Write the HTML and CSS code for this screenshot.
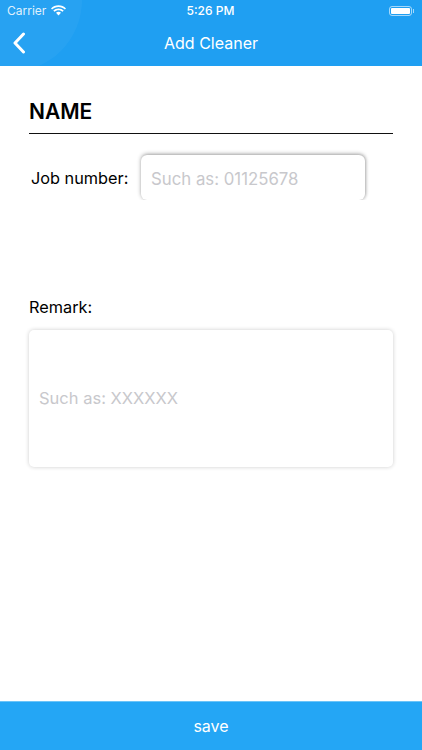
FILE: index.html
```html
<!doctype html>
<html lang="en">
  <head>
    <meta charset="utf-8">
    <meta name="viewport" content="width=device-width, initial-scale=1">
    <title>Add Cleaner</title>
    <link rel="stylesheet" href="styles.css">
  </head>
  <body>
    <header class="top">
      <div class="top__glow"></div>
      <div class="status">
        <div class="status__left">
          <span>Carrier</span>
          <svg class="wifi" width="15" height="11" viewBox="0 0 15 11">
            <path d="M7.5 2C10 2 12.2 3 13.9 4.6L15 3.4C13 1.4 10.4 .3 7.5 .3S2 1.4 0 3.4L1.1 4.6C2.8 3 5 2 7.5 2Z" fill="#fff"/>
            <path d="M7.5 5.2C9.1 5.2 10.500 5.8 11.6 6.8L12.7 5.6C11.3 4.3 9.5 3.5 7.5 3.5S3.7 4.3 2.3 5.6L3.4 6.8C4.5 5.8 5.9 5.2 7.5 5.2Z" fill="#fff"/>
            <path d="M7.5 6.8C6.6 6.8 5.7 7.2 5 7.8L7.5 10.6 10 7.8C9.3 7.2 8.4 6.8 7.5 6.8Z" fill="#fff"/>
          </svg>
        </div>
        <div class="status__time">5:26 PM</div>
        <div class="status__right">
          <div class="battery"><div class="battery__fill"></div></div>
          <div class="battery__tip"></div>
        </div>
      </div>
      <div class="nav">
        <svg class="back" width="14" height="22" viewBox="0 0 14 22">
          <path d="M11.5 2L3 11l8.500 9" fill="none" stroke="#fff" stroke-width="3" stroke-linecap="round" stroke-linejoin="round"/>
        </svg>
        <div class="nav__title">Add Cleaner</div>
      </div>
    </header>

    <main class="content">
      <h1 class="name">NAME</h1>
      <div class="job">
        <label class="job__label" for="job">Job number:</label>
        <div class="job__box">
          <input class="job__input" id="job" placeholder="Such as: 01125678">
        </div>
      </div>
      <label class="remark__label">Remark:</label>
      <div class="remark__box">Such as: XXXXXX</div>
    </main>

    <button class="save">save</button>
  </body>
</html>
```

FILE: styles.css
```css
html, body{
  height: 100%;
}
body{
  margin: 0;
  display: flex;
  flex-direction: column;
  background: #fff;
  font-family: Inter, "Liberation Sans", Arial, sans-serif;
  color: #000;
}
/*--------------------------*/
.top{
  position: relative;
  height: 66px;
  background: #1f9ff2;
  color: #fff;
  overflow: hidden;
}
.top__glow{
  position: absolute;
  left: -62px;
  top: -72px;
  width: 144px;
  height: 144px;
  border-radius: 50%;
  background: #ffffff0a;
}
.status{
  position: relative;
  display: flex;
  justify-content: space-between;
  align-items: center;
  height: 21px;
  padding: 0 7px;
  font-size: 12px;
}
.status__left{
  display: flex;
  align-items: center;
  gap: 5px;
  width: 120px;
  color: #ffffffdd;
}
.status__time{
  font-weight: 500;
}
.status__right{
  display: flex;
  align-items: center;
  justify-content: flex-end;
  width: 120px;
  padding-right: 1px;
}
.battery{
  width: 23px;
  height: 10px;
  padding: 1px;
  box-sizing: border-box;
  border: 1px solid #ffffff99;
  border-radius: 3px;
}
.battery__fill{
  height: 100%;
  background: #fff;
  border-radius: 1px;
}
.battery__tip{
  width: 1px;
  height: 4px;
  margin-left: 1px;
  background: #ffffff99;
}
/*--------------------------*/
.nav{
  position: relative;
  display: flex;
  align-items: center;
  justify-content: center;
  height: 44px;
}
.back{
  position: absolute;
  left: 12px;
  top: 11px;
}
.nav__title{
  font-size: 16px;
}
/*--------------------------*/
.content{
  flex: 1;
  padding: 33px 29px 0;
}
.name{
  margin: 0;
  padding-bottom: 8px;
  border-bottom: 1px solid #111;
  font-size: 21px;
  line-height: 26px;
  font-weight: 600;
}
.job{
  display: flex;
  align-items: center;
  margin-top: 21px;
  padding-left: 2px;
  padding-right: 28px;
}
.job__label{
  width: 109px;
  flex-shrink: 0;
  font-size: 16.3px;
}
.job__box{
  flex: 1;
  height: 45px;
  margin-left: 1px;
  border-radius: 6px;
  background: #fff;
  box-shadow: 0 -1px 4px #00000055, 1px 0 3px #00000026;
  clip-path: inset(-6px -6px 0 -6px);
}
.job__input{
  width: 100%;
  height: 100%;
  box-sizing: border-box;
  padding: 2px 10px 0;
  border: 0;
  outline: 0;
  background: transparent;
  font: inherit;
  font-size: 16.8px;
}
.job__input::placeholder{
  color: #c8c8cc;
  opacity: 1;
}
.remark__label{
  display: block;
  margin-top: 97px;
  font-size: 16.3px;
  line-height: 20px;
}
.remark__box{
  display: flex;
  align-items: center;
  height: 135px;
  margin-top: 13px;
  padding: 0 10px 2px;
  border-radius: 5px;
  background: #fff;
  box-shadow: 0 0 4px #00000033;
  color: #c8c8cc;
  font-size: 16.5px;
}
/*--------------------------*/
.save{
  height: 49px;
  border: 0;
  border-top: 1px solid #6cc4f8;
  background: #24a6f5;
  color: #fff;
  font: inherit;
  font-size: 16px;
}
```
